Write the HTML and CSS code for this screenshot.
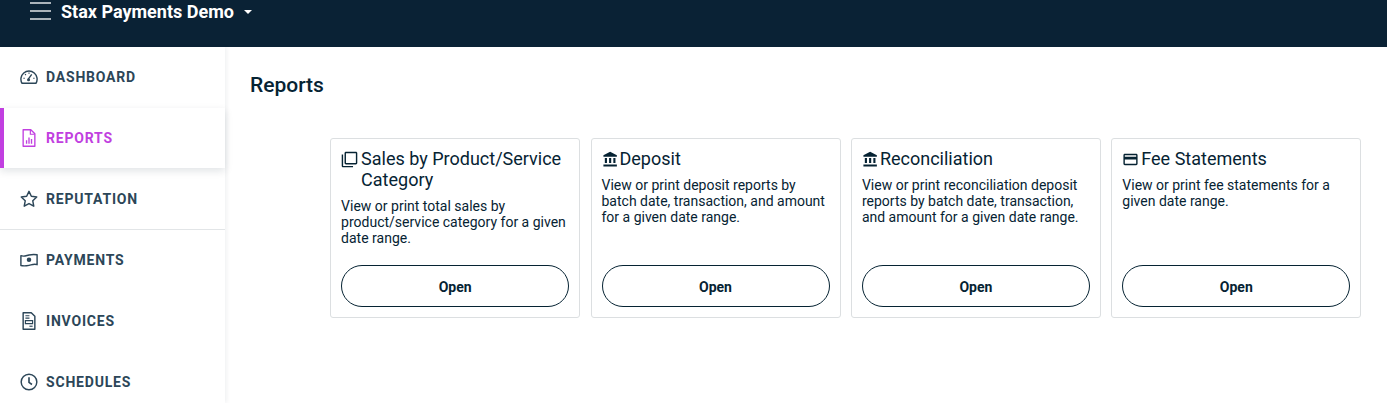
FILE: index.html
```html
<!DOCTYPE html>
<html lang="en">
<head>
    <meta charset="UTF-8">
    <meta name="viewport" content="width=device-width, initial-scale=1.0">
    <title>Reports</title>
    <link rel="stylesheet" href="styles.css">
</head>
<body>
    <!-- Top bar -->
    <header class="topbar">
        <svg class="menu-icon" viewBox="0 0 21 18" width="21" height="18"><path d="M0 1h21M0 9h21M0 17h21" fill="none" stroke="currentColor" stroke-width="1.300"/></svg>
        <span class="brand">Stax Payments Demo</span>
        <span class="caret"></span>
    </header>

    <div class="layout">
        <!-- Side menu -->
        <nav class="sidebar">
            <a class="nav-item">
                <svg class="nav-icon" viewBox="0 0 20 20"><path d="M2.300 17a9 9 0 1 1 15.400 0z" fill="none" stroke="currentColor" stroke-width="1.600" stroke-linejoin="round"/><path d="M9.200 12.300l3.800-5.300" stroke="currentColor" stroke-width="1.500"/><circle cx="9.500" cy="13" r="1.700" fill="currentColor"/><path d="M10 5v1.500M5.600 6.800l1 1M3.800 11.400h1.500M14.700 11.400h1.500" stroke="currentColor" stroke-width="1.300"/></svg>
                DASHBOARD
            </a>
            <a class="nav-item active">
                <svg class="nav-icon" viewBox="0 0 20 20"><path d="M3.500.8h8.500l4.500 4.500v13.900h-13z" fill="none" stroke="currentColor" stroke-width="1.500" stroke-linejoin="round"/><path d="M11.500 1v4.800h4.800" fill="none" stroke="currentColor" stroke-width="1.300"/><path d="M7.300 12.500v3.800M10 9.500v6.800M12.800 11v5.300" stroke="currentColor" stroke-width="1.500"/></svg>
                REPORTS
            </a>
            <a class="nav-item">
                <svg class="nav-icon" viewBox="0 0 20 20"><path d="M10 1.500l2.600 5.500 6 .8-4.400 4.200 1.100 6L10 15.100 4.700 18l1.100-6L1.400 7.800l6-.8z" fill="none" stroke="currentColor" stroke-width="1.600" stroke-linejoin="round"/></svg>
                REPUTATION
            </a>
            <a class="nav-item divided">
                <svg class="nav-icon" viewBox="0 0 20 20"><path d="M1 5.200c3.500 1.400 6-.2 9-.8 3-.6 6-.8 9-.2v11c-3.500-1.300-6 .2-9 .8-3 .6-6 .8-9 .2z" fill="none" stroke="currentColor" stroke-width="1.600" stroke-linejoin="round"/><circle cx="10" cy="9.800" r="2.500" fill="currentColor"/></svg>
                PAYMENTS
            </a>
            <a class="nav-item">
                <svg class="nav-icon" viewBox="0 0 20 20"><path d="M3.500.8h9l4 4v14.400h-13z" fill="none" stroke="currentColor" stroke-width="1.600" stroke-linejoin="round"/><path d="M6 4.200h4.500M6 6.800h4.500" stroke="currentColor" stroke-width="1.300"/><path d="M6 9.500h8v3.500H6z" fill="none" stroke="currentColor" stroke-width="1.300"/><path d="M10.500 15.800H14" stroke="currentColor" stroke-width="1.300"/></svg>
                INVOICES
            </a>
            <a class="nav-item">
                <svg class="nav-icon" viewBox="0 0 20 20"><circle cx="10" cy="10" r="8.700" fill="none" stroke="currentColor" stroke-width="1.600"/><path d="M10 4.800v5.700l3.300 2.300" fill="none" stroke="currentColor" stroke-width="1.800"/></svg>
                SCHEDULES
            </a>
        </nav>

        <!-- Report cards -->
        <main class="content">
            <h1>Reports</h1>
            <div class="cards">
                <section class="card">
                    <h2>
                        <svg class="card-icon copy" viewBox="0 0 24 24"><path d="M3 5H1v16c0 1.100.9 2 2 2h14v-2H3V5zm18-4H7c-1.100 0-2 .9-2 2v14c0 1.100.9 2 2 2h14c1.100 0 2-.9 2-2V3c0-1.100-.9-2-2-2zm0 16H7V3h14v14z"/></svg>
                        <span>Sales by Product/Service Category</span>
                    </h2>
                    <p>View or print total sales by product/service category for a given date range.</p>
                    <button class="open-button">Open</button>
                </section>
                <section class="card">
                    <h2>
                        <svg class="card-icon bank" viewBox="0 0 24 24"><path d="M4 10v7h3v-7H4zm6 0v7h3v-7h-3zM2 22h19v-3H2v3zm14-12v7h3v-7h-3zm-4.500-9L2 6v2h19V6l-9.500-5z"/></svg>
                        <span>Deposit</span>
                    </h2>
                    <p>View or print deposit reports by batch date, transaction, and amount for a given date range.</p>
                    <button class="open-button">Open</button>
                </section>
                <section class="card">
                    <h2>
                        <svg class="card-icon bank" viewBox="0 0 24 24"><path d="M4 10v7h3v-7H4zm6 0v7h3v-7h-3zM2 22h19v-3H2v3zm14-12v7h3v-7h-3zm-4.500-9L2 6v2h19V6l-9.500-5z"/></svg>
                        <span>Reconciliation</span>
                    </h2>
                    <p>View or print reconciliation deposit reports by batch date, transaction, and amount for a given date range.</p>
                    <button class="open-button">Open</button>
                </section>
                <section class="card">
                    <h2>
                        <svg class="card-icon" viewBox="0 0 24 24"><path d="M20 4H4c-1.110 0-1.990.89-1.990 2L2 18c0 1.110.89 2 2 2h16c1.110 0 2-.89 2-2V6c0-1.110-.89-2-2-2zm0 14H4v-6h16v6zm0-10H4V6h16v2z"/></svg>
                        <span>Fee Statements</span>
                    </h2>
                    <p>View or print fee statements for a given date range.</p>
                    <button class="open-button">Open</button>
                </section>
            </div>
        </main>
    </div>
</body>
</html>
```

FILE: styles.css
```css
/* General */
html, body {
    height: 100%;
}

body {
    margin: 0;
    overflow: hidden;
    font-family: Roboto, 'Liberation Sans', sans-serif;
    color: #062333;
    background: #fff;
}

/* Top bar */
.topbar {
    display: flex;
    align-items: flex-start;
    height: 47px;
    padding: 2px 0 0 30px;
    box-sizing: border-box;
    background: #0a2235;
    color: #fff;
}

.menu-icon {
    flex: none;
    color: #dfe3e6;
}

.brand {
    margin: -1px 0 0 10px;
    font-size: 18px;
    line-height: 21px;
    font-weight: 700;
}

.caret {
    margin: 8px 0 0 10px;
    border-left: 4.500px solid transparent;
    border-right: 4.500px solid transparent;
    border-top: 4.500px solid #fff;
}

/* Page under the bar */
.layout {
    display: flex;
    height: calc(100% - 47px);
}

.sidebar {
    flex: none;
    display: flex;
    flex-direction: column;
    gap: 1px;
    width: 225px;
    box-shadow: 2px 0 4px rgba(6, 33, 53, 0.06);
}

.nav-item {
    flex: none;
    display: flex;
    align-items: center;
    height: 60px;
    padding-left: 20px;
    box-sizing: border-box;
    font-size: 14px;
    font-weight: 700;
    letter-spacing: 0.800px;
    color: #2c4658;
}

.nav-item.active {
    padding-left: 16px;
    border-left: 4px solid #c13fe0;
    color: #c13fe0;
    box-shadow: 0 3px 8px rgba(6, 33, 53, 0.12);
}

.nav-item.divided {
    height: 61px;
    margin-top: -1px;
    border-top: 1px solid #e2e5e7;
}

.nav-icon {
    flex: none;
    width: 18px;
    height: 18px;
    margin-right: 8px;
}

.content {
    flex: 1;
    min-width: 0;
    padding: 26px 26px 0 25px;
}

h1 {
    margin: 0 0 41px;
    font-size: 21px;
    line-height: 24px;
    font-weight: 500;
}

/* Cards */
.cards {
    display: grid;
    grid-template-columns: repeat(4, 250px);
    column-gap: 10.420px;
    margin-left: 80.100px;
}

.card {
    display: flex;
    flex-direction: column;
    height: 180px;
    padding: 9px 10px 10px;
    box-sizing: border-box;
    border: 1px solid #dcdfe1;
    border-radius: 3px;
}

.card h2 {
    display: flex;
    margin: 0 0 8px;
    font-size: 18px;
    line-height: 21px;
    font-weight: 400;
}

.card-icon {
    flex: none;
    width: 17px;
    height: 17px;
    margin: 3px 2px 0 0;
    fill: currentColor;
}

.card-icon.copy {
    margin-right: 3px;
}

.card-icon.bank {
    margin-right: 1px;
}

.card p {
    margin: 0;
    font-size: 14px;
    line-height: 16px;
}

.open-button {
    flex: none;
    height: 42px;
    margin-top: auto;
    padding: 2px 0 0;
    border: 1px solid #062333;
    border-radius: 21px;
    background: #fff;
    color: #062333;
    font-family: inherit;
    font-size: 14px;
    font-weight: 700;
    cursor: pointer;
}
```
